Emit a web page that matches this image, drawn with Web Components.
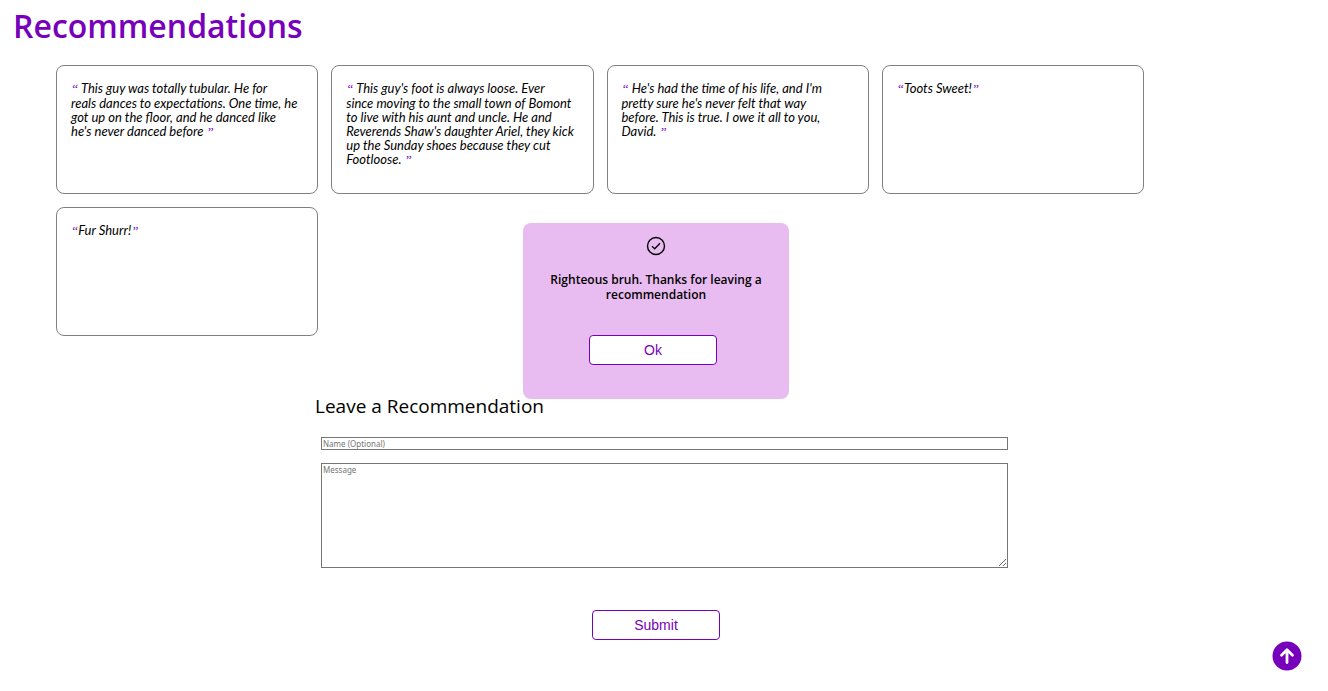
<!DOCTYPE html>
<html lang="en">
<head>
<meta charset="utf-8">
<meta name="viewport" content="width=device-width, initial-scale=1">
<title>Recommendations</title>
<style>
  html { --accent: #7700bb; --font: "Trebuchet MS", "Open Sans", sans-serif; --small-font: "Trebuchet MS", "Noto Sans", sans-serif; --quote-font: "Trebuchet MS", Lato, sans-serif; }
  body { margin: 0; background: #fff; color: #000; font-family: var(--font); }
</style>
</head>
<body>
<recommendations-page></recommendations-page>
<script>
const define = (name, html, setup) => customElements.define(name, class extends HTMLElement {
  constructor() {
    super();
    const t = document.createElement('template');
    t.innerHTML = html;
    this.attachShadow({ mode: 'open' }).append(t.content.cloneNode(true));
    if (setup) setup(this.shadowRoot, this);
  }
});

define('quote-card', `
<style>
  :host { display: block; box-sizing: border-box; min-height: 129px; padding: 15px 12px 13px 14px; border: 1px solid #808080; border-radius: 8px; }
  p { margin: 0; font: italic 13px/14px var(--quote-font); }
  span { color: var(--accent); font-family: "Liberation Serif", serif; }
</style>
<p><span>“</span><slot></slot><span>”</span></p>`);

define('outline-button', `
<style>
  :host { display: inline-block; }
  button { display: block; width: 128px; height: 30px; padding: 0; border: 1px solid var(--accent); border-radius: 4px; background: #fff; color: var(--accent); font: 14px "Liberation Sans", Arial, sans-serif; cursor: pointer; }
</style>
<button type="button"><slot></slot></button>`);

define('thanks-dialog', `
<style>
  :host { display: block; box-sizing: border-box; width: 266px; min-height: 176px; padding: 13px 20px 34px; border-radius: 8px; background: #e8bcf0; text-align: center; }
  :host([hidden]) { display: none; }
  svg { display: block; width: 20px; height: 20px; margin: 0 auto; }
  p { margin: 16px 0 33px; font-size: 12px; line-height: 15px; font-weight: 600; }
  footer { padding-right: 6px; line-height: 0; }
</style>
<svg viewBox="0 0 20 20" fill="none" stroke="#000" aria-hidden="true"><circle cx="10" cy="10" r="8.5" stroke-width="1.4"/><path d="M6 10.3 8.7 12.8 14 7.2" stroke-width="1.3"/></svg>
<p><slot></slot></p>
<footer><outline-button>Ok</outline-button></footer>`,
(root, host) => root.querySelector('outline-button').addEventListener('click', () => { host.hidden = true; }));

define('recommendation-form', `
<style>
  :host { display: block; }
  form { display: flex; flex-direction: column; }
  h2 { margin: 0 0 18px 315px; font-size: 19px; line-height: 26px; font-weight: 400; }
  .fields { display: grid; gap: 13px; margin: 0 304px 42px 321px; }
  input, textarea { box-sizing: border-box; width: 100%; margin: 0; border: 1px solid #767676; border-radius: 0; background: #fff; font: 8px/10px var(--small-font); padding: 0 1px; }
  input { height: 13px; }
  textarea { display: block; height: 105px; padding-top: 1px; resize: both; }
  ::placeholder { color: #757575; }
  outline-button { align-self: center; }
</style>
<form>
  <h2>Leave a Recommendation</h2>
  <div class="fields">
    <input type="text" placeholder="Name (Optional)" aria-label="Name (Optional)">
    <textarea placeholder="Message" aria-label="Message"></textarea>
  </div>
  <outline-button>Submit</outline-button>
</form>`);

define('back-to-top', `
<style>
  :host { position: fixed; right: 26px; bottom: 20px; display: block; }
  a { display: block; border-radius: 50%; }
  svg { display: block; width: 30px; height: 30px; }
</style>
<a href="#" aria-label="Back to top"><svg viewBox="0 0 30 30" fill="none"><circle cx="15" cy="15" r="14.5" fill="#7700bb"/><path d="M15 21.500V9M9.500 14.200 15 8.700l5.500 5.500" stroke="#fff" stroke-width="2.800" stroke-linecap="round" stroke-linejoin="round"/></svg></a>`);

define('recommendations-page', `
<style>
  :host { display: block; }
  main { position: relative; margin-right: 16px; }
  h1 { margin: 0; padding: 6px 13px 19px; color: var(--accent); font-size: 32px; line-height: 40px; font-weight: 600; }
  .cards { display: grid; grid-template-columns: repeat(auto-fill, minmax(240px, 1fr)); gap: 13px; margin: 0 168px 57px 56px; }
  thanks-dialog { position: absolute; top: 223px; left: 50%; transform: translateX(-50%); }
</style>
<main>
  <h1>Recommendations</h1>
  <div class="cards">
    <quote-card> This guy was totally tubular. He for<br>reals dances to expectations. One time, he<br>got up on the floor, and he danced like<br>he's never danced before </quote-card>
    <quote-card> This guy's foot is always loose. Ever<br>since moving to the small town of Bomont<br>to live with his aunt and uncle. He and<br>Reverends Shaw's daughter Ariel, they kick<br>up the Sunday shoes because they cut<br>Footloose. </quote-card>
    <quote-card> He's had the time of his life, and I'm<br>pretty sure he's never felt that way<br>before. This is true. I owe it all to you,<br>David. </quote-card>
    <quote-card>Toots Sweet!</quote-card>
    <quote-card>Fur Shurr!</quote-card>
  </div>
  <recommendation-form></recommendation-form>
  <thanks-dialog role="dialog">Righteous bruh. Thanks for leaving a recommendation</thanks-dialog>
  <back-to-top></back-to-top>
</main>`);
</script>
</body>
</html>
